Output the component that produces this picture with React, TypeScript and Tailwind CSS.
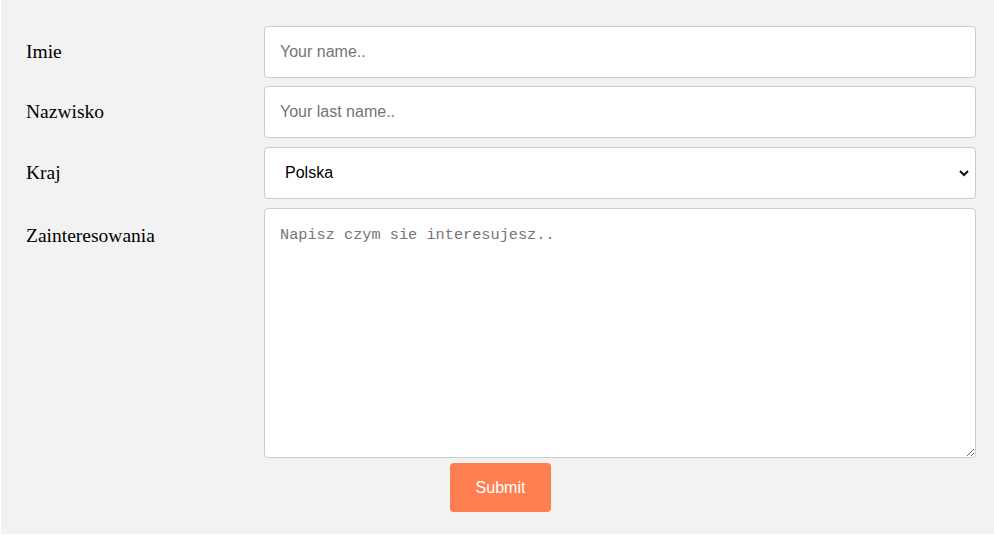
import { useState } from "react";

const fieldCls =
  "w-full h-[52px] rounded-[4px] border border-[#cccccc] bg-white px-[15px] font-['Liberation_Sans',Arial,sans-serif] text-[16px] text-black placeholder:text-[#757575] outline-none";

function Label({ children, top }: { children: string; top?: boolean }) {
  return (
    <label
      className={`w-[238px] shrink-0 font-['Liberation_Serif','Times_New_Roman',serif] text-[19.5px] text-black ${
        top ? "pt-[13px]" : "flex items-center"
      }`}
    >
      {children}
    </label>
  );
}

export default function App() {
  const [country, setCountry] = useState("polska");

  return (
    <div className="min-h-screen bg-white pl-px">
      <form className="h-[534px] bg-[#f2f2f2] pl-[25px] pr-[18px] pt-[26px]">
        <div className="mb-[8px] flex">
          <Label>Imie</Label>
          <input className={fieldCls} placeholder="Your name.." />
        </div>
        <div className="mb-[9px] flex">
          <Label>Nazwisko</Label>
          <input className={fieldCls} placeholder="Your last name.." />
        </div>
        <div className="mb-[9px] flex">
          <Label>Kraj</Label>
          <div className="relative w-full">
            <select
              value={country}
              onChange={(e) => setCountry(e.target.value)}
              className={`${fieldCls} appearance-none pl-[20px]`}
            >
              <option value="polska">Polska</option>
              <option value="niemcy">Niemcy</option>
              <option value="czechy">Czechy</option>
            </select>
            <svg
              className="pointer-events-none absolute right-[6px] top-1/2 -translate-y-1/2"
              width="12"
              height="12"
              viewBox="0 0 12 12"
            >
              <path d="M2 4l4 4 4-4" fill="none" stroke="#111" strokeWidth="2" />
            </svg>
          </div>
        </div>
        <div className="flex">
          <Label top>Zainteresowania</Label>
          <textarea
            className="h-[250px] w-full rounded-[4px] border border-[#cccccc] bg-white px-[15px] pb-[15px] pt-[17px] font-['Liberation_Mono','Courier_New',monospace] text-[15.25px] leading-[18px] placeholder:text-[#757575] outline-none"
            placeholder="Napisz czym sie interesujesz.."
          />
        </div>
        <div className="mt-[5px] pl-[424px]">
          <button
            type="button"
            className="h-[49px] w-[101px] rounded-[4px] bg-[#ff7f50] font-['Liberation_Sans',Arial,sans-serif] text-[16px] text-white"
          >
            Submit
          </button>
        </div>
      </form>
    </div>
  );
}
